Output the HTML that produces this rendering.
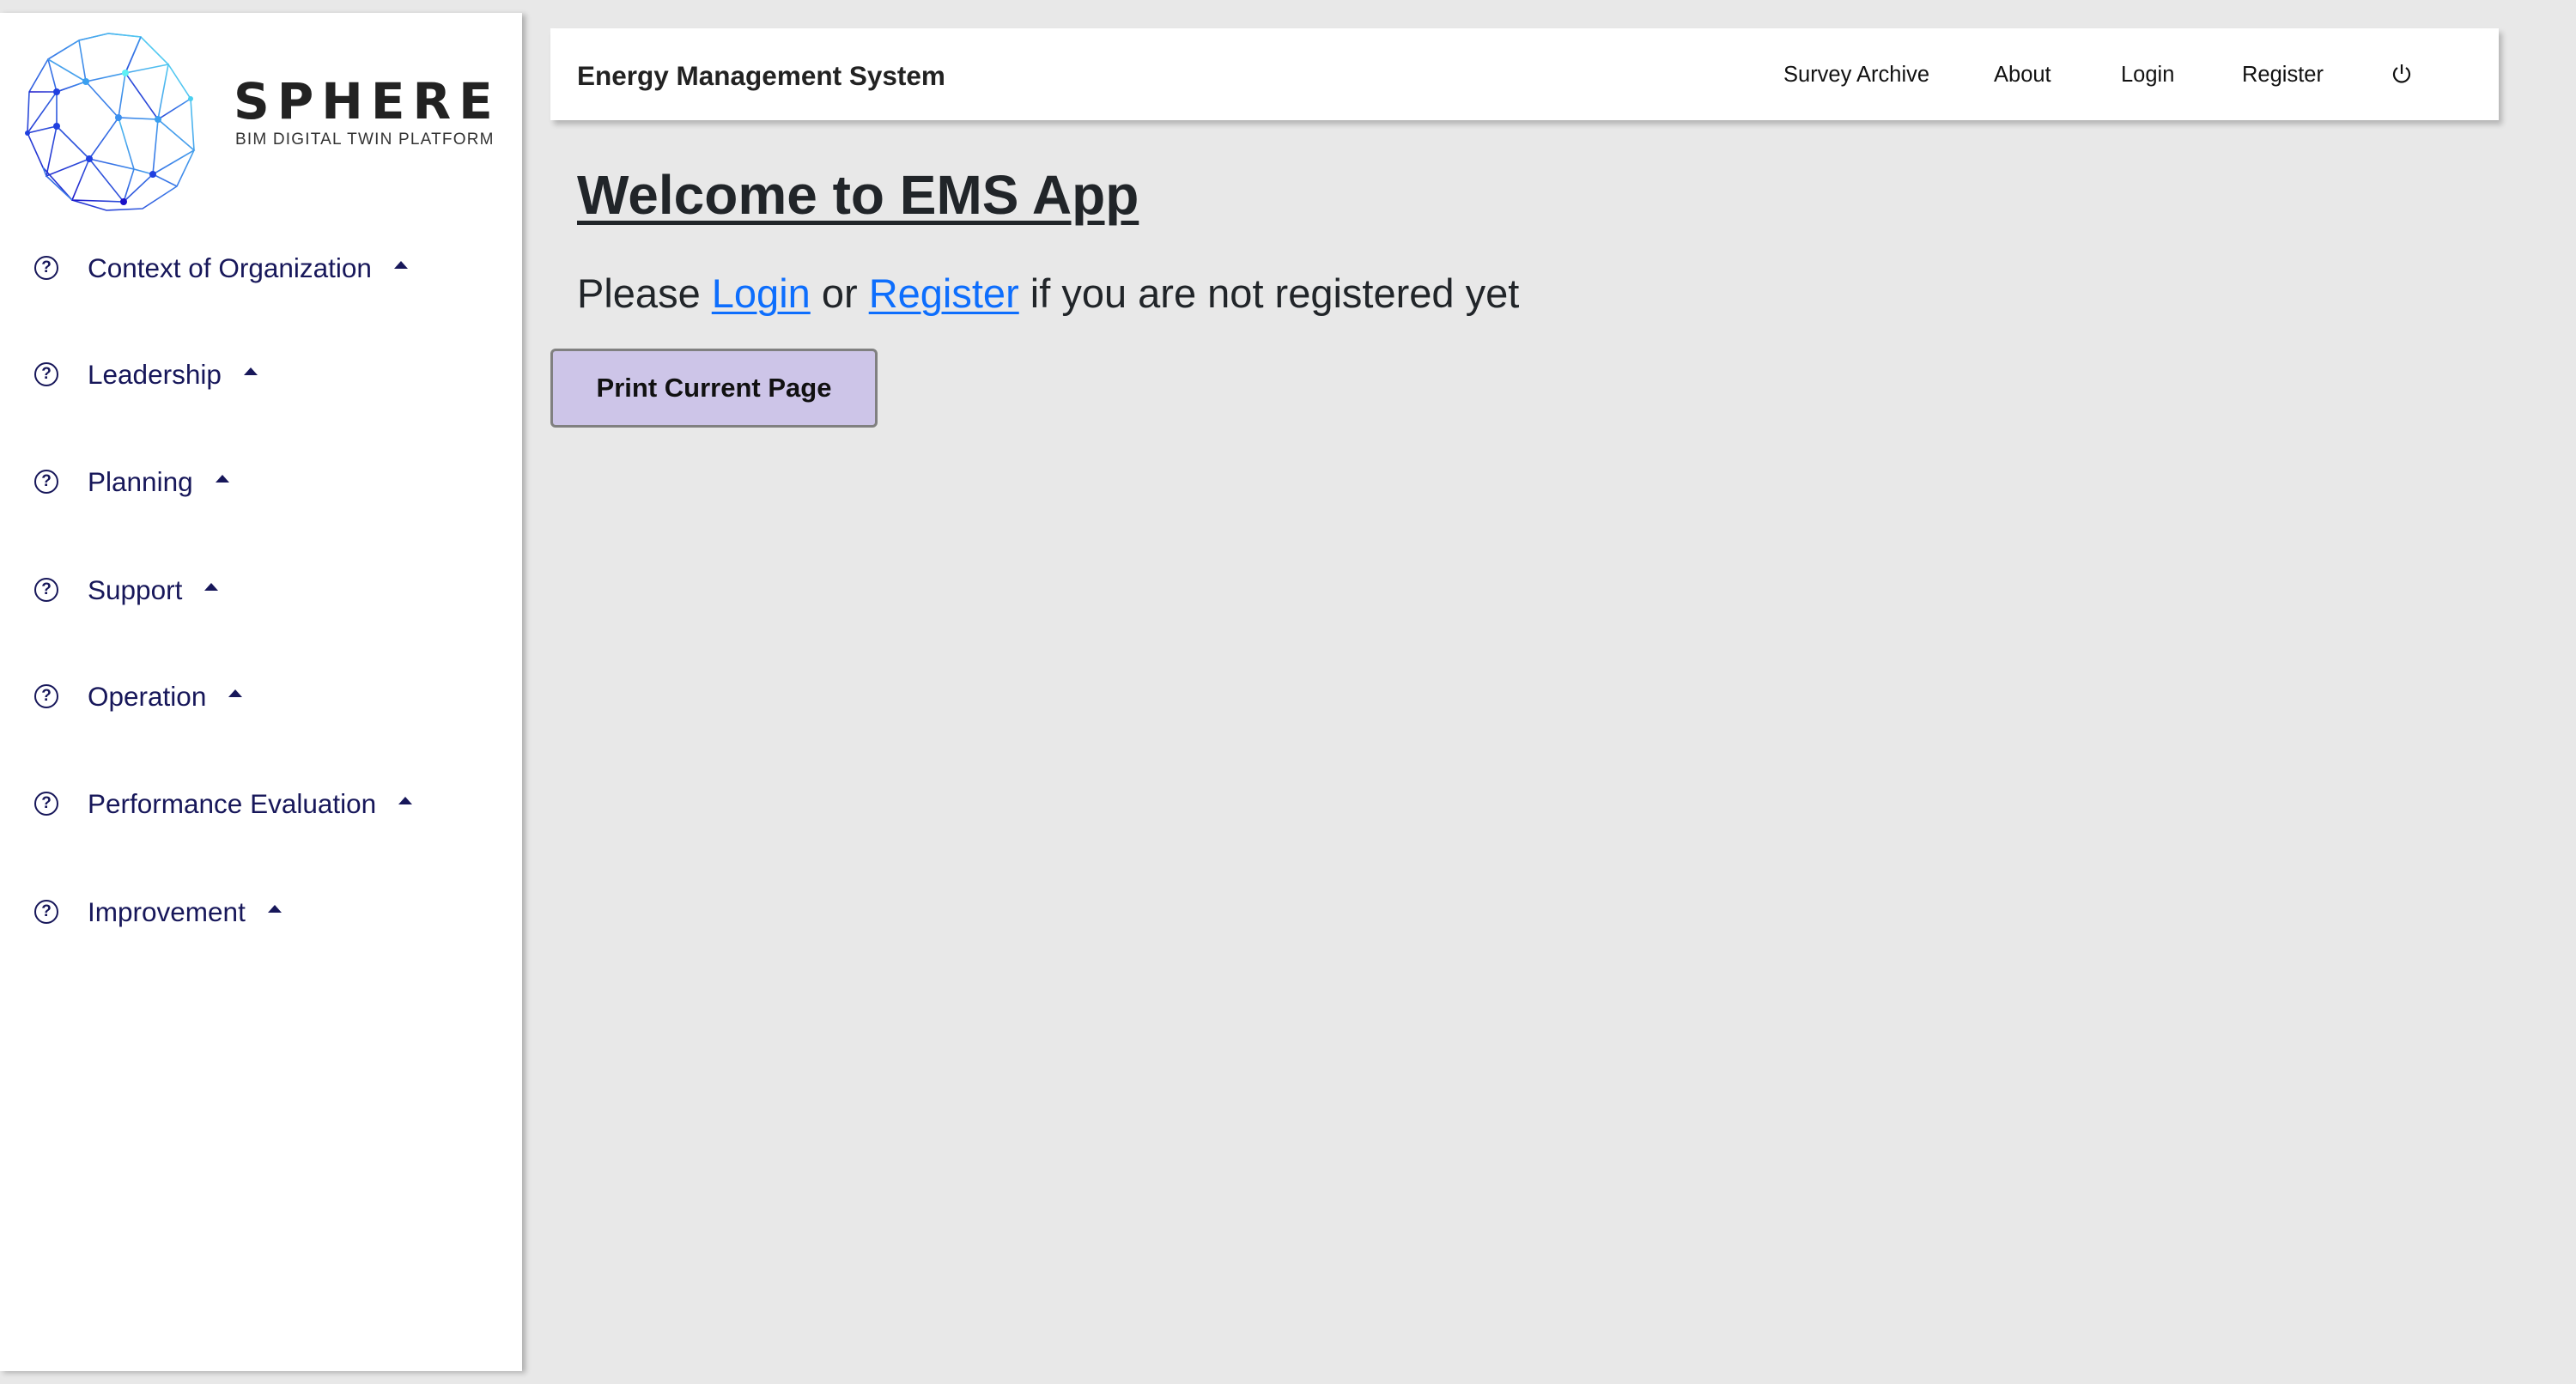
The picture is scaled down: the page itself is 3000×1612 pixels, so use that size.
<!DOCTYPE html>
<html><head><meta charset="utf-8">
<style>
*{margin:0;padding:0;box-sizing:border-box}
html,body{width:3000px;height:1612px;overflow:hidden;background:#e8e8e8;font-family:"Liberation Sans",sans-serif}
.side{position:absolute;left:0;top:15px;width:608px;height:1582px;background:#fff;box-shadow:4px 2px 6px rgba(0,0,0,.25)}
.logo{position:absolute;left:26px;top:20px}
.brand{position:absolute;left:272px;top:74px;font-family:"DejaVu Sans",sans-serif;font-weight:bold;font-size:58px;letter-spacing:9px;color:#222;line-height:1}
.sub{position:absolute;left:274px;top:137px;font-size:19px;color:#333;letter-spacing:1.2px;white-space:nowrap}
.item{position:absolute;left:0;height:40px;display:flex;align-items:center;color:#17175a;font-size:31.5px;white-space:nowrap}
.item .q{position:absolute;left:40px;width:28px;height:28px;border:2.5px solid #17175a;border-radius:50%;font-size:19px;font-weight:bold;text-align:center;line-height:23px}
.item .t{position:absolute;left:102px}
.item .tri{display:inline-block;margin-left:26px;width:0;height:0;border-left:8px solid transparent;border-right:8px solid transparent;border-bottom:9px solid #17175a;vertical-align:middle;position:relative;top:-6px}
.nav{position:absolute;left:641px;top:33px;width:2269px;height:107px;background:#fff;box-shadow:4px 5px 6px rgba(0,0,0,.22)}
.nav .title{position:absolute;left:31px;top:37px;font-size:31.5px;font-weight:bold;color:#222}
.nav a{position:absolute;top:40px;font-size:25.5px;color:#111;text-decoration:none;white-space:nowrap}
h1{position:absolute;left:672px;top:190px;font-size:64px;font-weight:bold;color:#212529;text-decoration:underline;text-decoration-thickness:5px;text-underline-offset:8px;white-space:nowrap}
p{position:absolute;left:672px;top:314px;font-size:47px;color:#212529;white-space:nowrap}
p a{color:#0d6efd;text-decoration:underline;text-decoration-thickness:3px;text-underline-offset:5px}
.btn{position:absolute;left:641px;top:406px;width:381px;height:92px;background:#cdc5e8;border:3px solid #808080;border-radius:6px;font-size:31px;font-weight:bold;color:#111;text-align:center;line-height:86px}
</style></head><body>
<div class="side">
<svg class="logo" width="212" height="212" viewBox="0 0 212 212">
<defs><linearGradient id="g" x1="1" y1="0" x2="0" y2="1"><stop offset="0" stop-color="#5ff0f5"/><stop offset=".5" stop-color="#3a7be8"/><stop offset="1" stop-color="#1a10c8"/></linearGradient></defs>
<g stroke="url(#g)" stroke-width="1.6" fill="none">
<polygon points="100,4 138,8 170,40 196,80 200,140 180,182 140,208 98,210 58,198 24,160 6,120 8,72 30,34 66,12"/>
<polyline points="66,12 100,4 138,8 120,50 74,60 66,12 30,34 40,72 74,60 112,102 120,50 170,40 158,104 112,102 78,150 40,112 40,72 6,120 40,112 28,170 78,150 118,200 152,168 158,104 200,140 152,168 180,182"/>
<polyline points="8,72 40,72 74,60 30,34"/><polyline points="112,102 130,162 78,150 58,198 118,200 130,162 152,168"/>
<polyline points="196,80 158,104 120,50 138,8"/><polyline points="24,160 28,170 58,198"/>
</g>
<g fill="#2040e0"><circle cx="40" cy="72" r="4"/><circle cx="74" cy="60" r="4" fill="#3aa0f0"/><circle cx="120" cy="50" r="4" fill="#5ef0f5"/><circle cx="112" cy="102" r="4" fill="#3a90f0"/><circle cx="40" cy="112" r="4"/><circle cx="78" cy="150" r="4"/><circle cx="152" cy="168" r="4"/><circle cx="158" cy="104" r="4" fill="#3aa0f0"/><circle cx="118" cy="200" r="4" fill="#1a10c8"/><circle cx="6" cy="120" r="3"/><circle cx="196" cy="80" r="3" fill="#4ad0f0"/></g>
</svg>
<div class="brand">SPHERE</div>
<div class="sub">BIM DIGITAL TWIN PLATFORM</div>
<div class="item" style="top:277px"><span class="q">?</span><span class="t">Context of Organization<span class="tri"></span></span></div>
<div class="item" style="top:401px"><span class="q">?</span><span class="t">Leadership<span class="tri"></span></span></div>
<div class="item" style="top:526px"><span class="q">?</span><span class="t">Planning<span class="tri"></span></span></div>
<div class="item" style="top:652px"><span class="q">?</span><span class="t">Support<span class="tri"></span></span></div>
<div class="item" style="top:776px"><span class="q">?</span><span class="t">Operation<span class="tri"></span></span></div>
<div class="item" style="top:901px"><span class="q">?</span><span class="t">Performance Evaluation<span class="tri"></span></span></div>
<div class="item" style="top:1027px"><span class="q">?</span><span class="t">Improvement<span class="tri"></span></span></div>
</div>
<div class="nav">
<div class="title">Energy Management System</div>
<a style="left:1436px">Survey Archive</a>
<a style="left:1681px">About</a>
<a style="left:1829px">Login</a>
<a style="left:1970px">Register</a>
<svg style="position:absolute;left:2143px;top:40px" width="26" height="28" viewBox="0 0 26 28"><path d="M8 6 A9 9 0 1 0 18 6" stroke="#111" stroke-width="2.2" fill="none"/><line x1="13" y1="2" x2="13" y2="13" stroke="#111" stroke-width="2.2"/></svg>
</div>
<h1>Welcome to EMS App</h1>
<p>Please <a>Login</a> or <a>Register</a> if you are not registered yet</p>
<div class="btn">Print Current Page</div>
</body></html>
